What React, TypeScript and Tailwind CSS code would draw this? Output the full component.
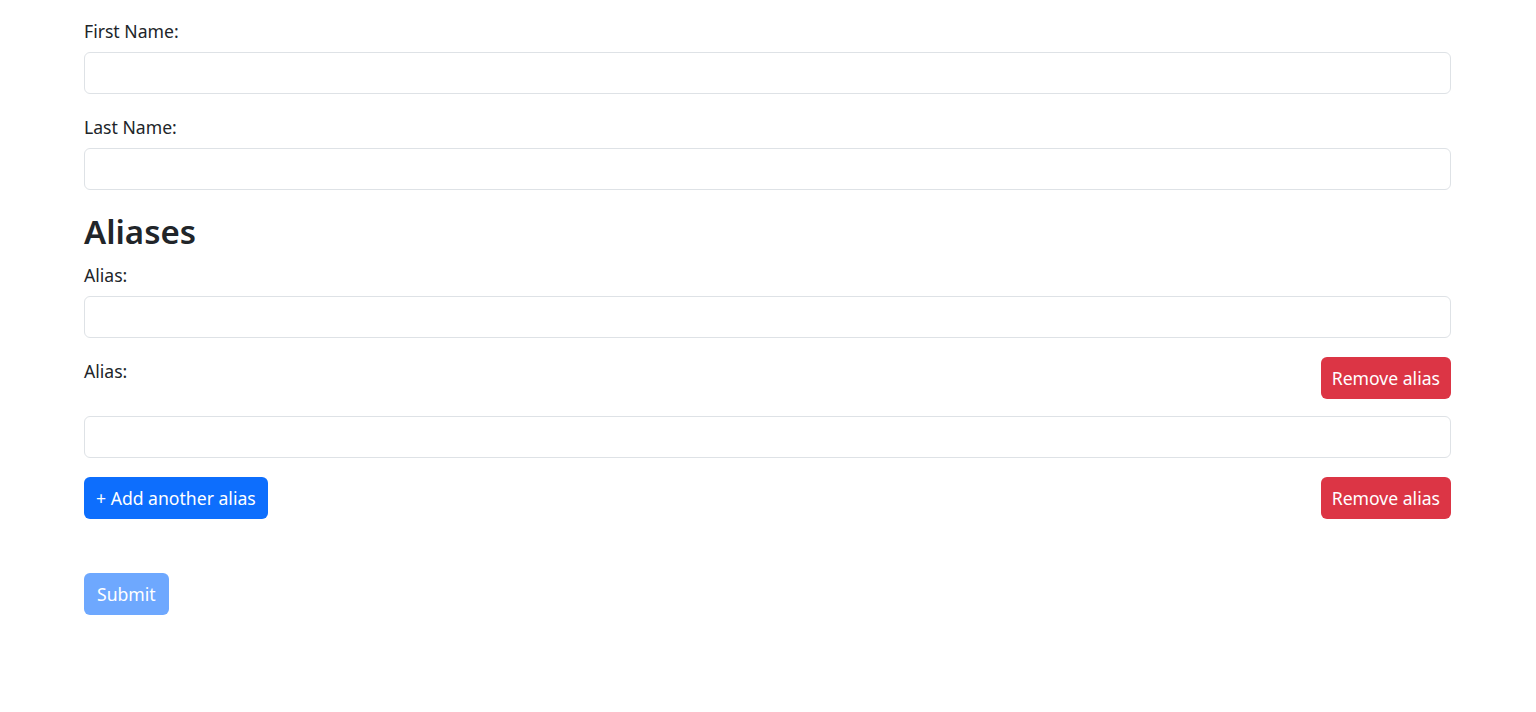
import React from "react";

const font = { fontFamily: '"Noto Sans", "Open Sans", sans-serif' };

const Field = ({ label }: { label: string }) => (
  <div className="mb-[20px]">
    <label className="block mb-2 text-[17.6px] leading-[26px] text-[#212529]">{label}</label>
    <input className="block w-full h-[42px] rounded-[6px] border border-[#dee2e6] bg-white px-3" />
  </div>
);

const App = () => {
  return (
    <div className="min-h-screen bg-white text-[#212529]" style={font}>
      <form className="pl-[84px] pr-[85px] pt-[18px]">
        <Field label="First Name:" />
        <Field label="Last Name:" />

        <h2 className="mt-[21px] mb-[9px] text-[33px] leading-[42px] font-semibold">Aliases</h2>

        <label className="block mb-2 text-[17.6px] leading-[26px]">Alias:</label>
        <input className="block w-full h-[42px] rounded-[6px] border border-[#dee2e6] bg-white px-3" />

        <div className="mt-[19px] flex items-start justify-between">
          <label className="mt-[1px] text-[17.6px] leading-[26px]">Alias:</label>
          <button type="button" className="h-[42px] rounded-[6px] bg-[#dc3545] px-[11px] text-[17.6px] text-white">
            Remove alias
          </button>
        </div>
        <input className="mt-[17px] block w-full h-[42px] rounded-[6px] border border-[#dee2e6] bg-white px-3" />

        <div className="mt-[19px] flex items-start justify-between">
          <button type="button" className="h-[42px] rounded-[6px] bg-[#0d6efd] px-[12px] text-[17.6px] text-white">
            + Add another alias
          </button>
          <button type="button" className="h-[42px] rounded-[6px] bg-[#dc3545] px-[11px] text-[17.6px] text-white">
            Remove alias
          </button>
        </div>

        <button
          type="submit"
          disabled
          className="mt-[54px] h-[42px] rounded-[6px] bg-[#6ea8fe] px-[13px] text-[17.6px] text-white"
        >
          Submit
        </button>
      </form>
    </div>
  );
};

export default App;
